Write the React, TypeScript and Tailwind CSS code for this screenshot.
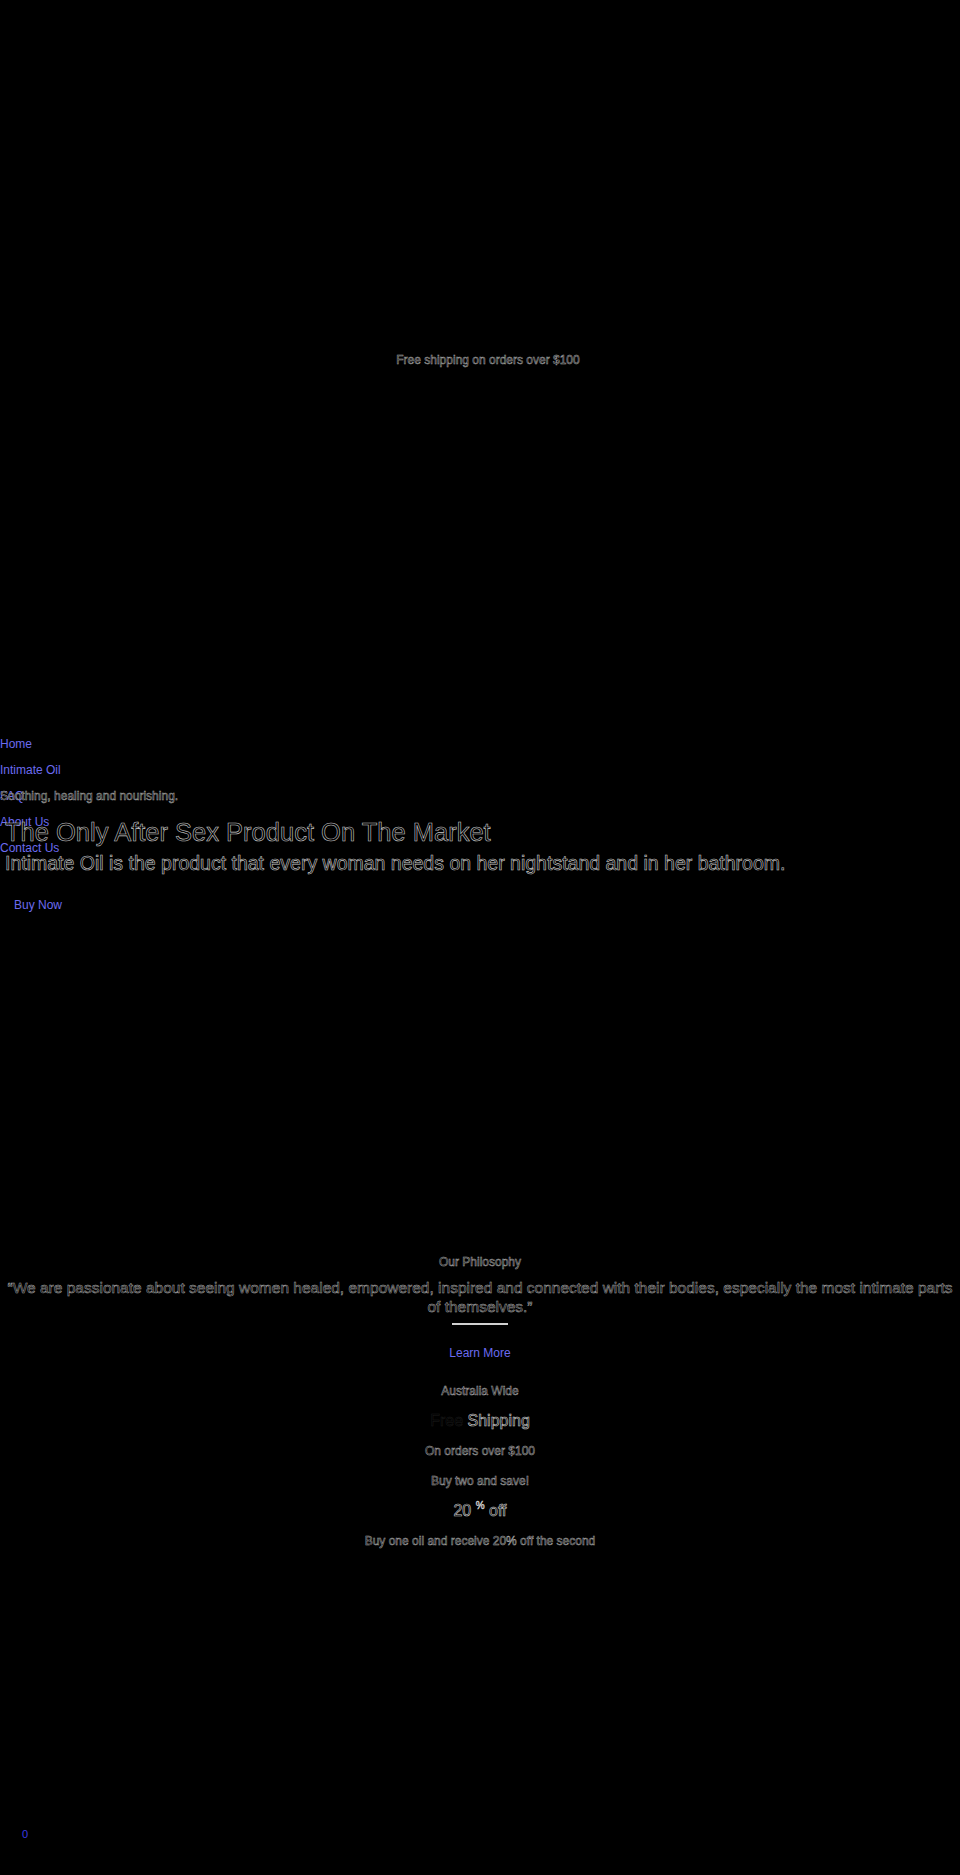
import React from "react";

const hollow = "text-black [-webkit-text-stroke:0.5px_#a8a8a8]";
const hollowBig = "text-black [-webkit-text-stroke:0.6px_#c8c8c8]";
const link = "text-[#6b6bf0]";

export default function App() {
  return (
    <div className="w-[960px] h-[1875px] bg-black font-['Liberation_Sans',Arial,sans-serif] relative overflow-hidden">
      <div className="h-[350px]" />
      <p className={`text-center text-[12px] leading-[20px] pl-[16px] ${hollow}`}>Free shipping on orders over $100</p>
      <div className="h-[361px]" />
      <div className="relative">
        <nav className="flex flex-col text-[12px] leading-[26px]">
          <a className={link}>Home</a>
          <a className={link}>Intimate Oil</a>
          <a className={link}>FAQ</a>
          <a className={link}>About Us</a>
          <a className={link}>Contact Us</a>
        </nav>
        <div className="absolute left-0 top-[52px] w-full">
          <p className={`text-[12px] leading-[26px] ${hollow}`}>Soothing, healing and nourishing.</p>
          <h1 className={`text-[25.5px] leading-[32px] mt-[7px] pl-[5px] ${hollowBig}`}>The Only After Sex Product On The Market</h1>
          <p className={`text-[19.5px] leading-[24px] mt-[3px] pl-[5px] ${hollowBig}`}>Intimate Oil is the product that every woman needs on her nightstand and in her bathroom.</p>
          <a className={`${link} block text-[12px] leading-[20px] ml-[14px] mt-[20px]`}>Buy Now</a>
        </div>
      </div>
      <div className="h-[391px]" />
      <section className="flex flex-col items-center text-center">
        <h2 className={`text-[12px] leading-[20px] ${hollow}`}>Our Philosophy</h2>
        <p className={`text-[15.5px] leading-[19px] mt-[6px] px-[4px] ${hollow}`}>
          “We are passionate about seeing women healed, empowered, inspired and connected with their bodies, especially the most intimate parts of themselves.”
        </p>
        <div className="w-[56px] h-[2px] bg-[#d0d0d0] mt-[7px]" />
        <a className={`${link} text-[12px] leading-[20px] mt-[18px]`}>Learn More</a>
        <p className={`text-[12px] leading-[20px] mt-[18px] ${hollow}`}>Australia Wide</p>
        <p className={`text-[16px] leading-[20px] mt-[10px] ${hollowBig}`}>
          <span className="text-black [-webkit-text-stroke:0.5px_#1c1c1c]">Free</span> Shipping
        </p>
        <p className={`text-[12px] leading-[20px] mt-[10px] ${hollow}`}>On orders over $100</p>
        <p className={`text-[12px] leading-[20px] mt-[10px] ${hollow}`}>Buy two and save!</p>
        <p className={`text-[16px] leading-[20px] mt-[10px] ${hollowBig}`}>
          20 <span className="relative top-[-7px] text-[10px] leading-none">%</span> off
        </p>
        <p className={`text-[12px] leading-[20px] mt-[10px] ${hollow}`}>Buy one oil and receive 20% off the second</p>
      </section>
      <span className="absolute left-[22px] top-[1826px] text-[11px] leading-[16px] text-[#3a3ae0]">0</span>
    </div>
  );
}
